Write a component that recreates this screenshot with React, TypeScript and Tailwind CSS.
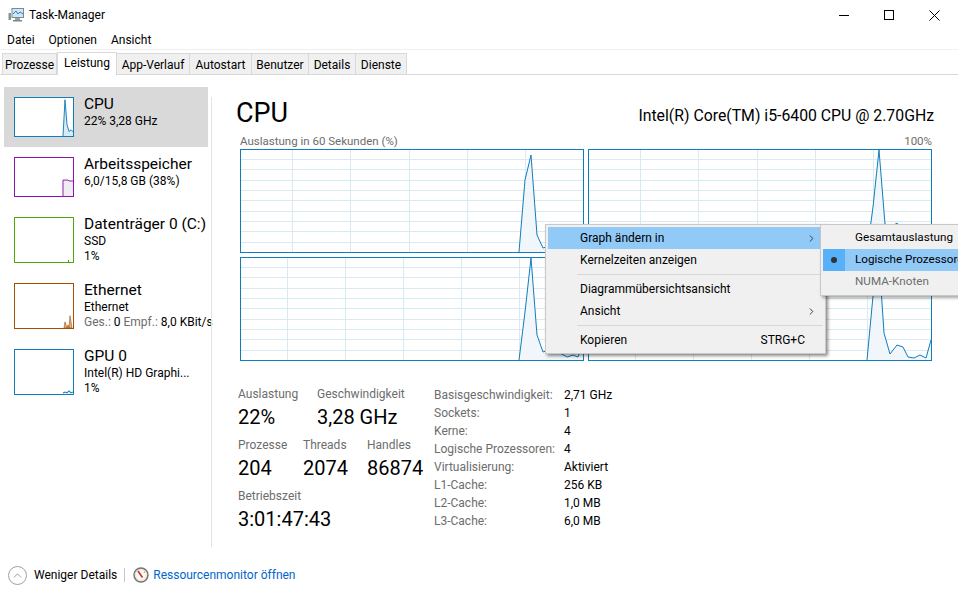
import { ChevronRight, ChevronUp } from 'lucide-react';

const FONT = "font-['Roboto','Liberation_Sans',sans-serif]";

const MENU_ITEMS = ['Datei', 'Optionen', 'Ansicht'];

const TABS = [
  { label: 'Prozesse', w: 'w-[55px]' },
  { label: 'Leistung', w: 'w-[60px]', active: true },
  { label: 'App-Verlauf', w: 'w-[73px]' },
  { label: 'Autostart', w: 'w-[62px]' },
  { label: 'Benutzer', w: 'w-[57px]' },
  { label: 'Details', w: 'w-[47px]' },
  { label: 'Dienste', w: 'w-[51px]' },
];

const SPECS = [
  ['Basisgeschwindigkeit:', '2,71 GHz'],
  ['Sockets:', '1'],
  ['Kerne:', '4'],
  ['Logische Prozessoren:', '4'],
  ['Virtualisierung:', 'Aktiviert'],
  ['L1-Cache:', '256 KB'],
  ['L2-Cache:', '1,0 MB'],
  ['L3-Cache:', '6,0 MB'],
];

// coordinates are local to each 344x104 graph box
const GRAPHS = [
  {
    grid: [52, 110, 169, 227, 285],
    line: '279,103 285,31 291,6 297,86 303,99 309,97 316,92 324,98 332,95 343,97',
  },
  {
    grid: [52, 110, 169, 227, 285],
    line: '279,103 285,58 291,1 297,75 303,78 309,74 320,90 332,96 343,98',
  },
  {
    grid: [47, 105, 163, 221, 279],
    line: '279,103 285,55 291,1 297,78 303,95 309,93 320,96 327,100 333,98 338,100 343,86',
  },
  {
    grid: [47, 105, 163, 221, 279],
    line: '279,103 285,39 291,1 296,76 302,97 309,88 315,90 320,100 326,101 332,98 338,101 343,83',
  },
];

const Graph = ({ grid, line }: { grid: number[]; line: string }) => (
  <div className="h-[104px] w-[344px] border border-[#117dbb] bg-white">
    <svg width="342" height="102" viewBox="1 1 342 102" className="block">
      {[10, 20, 31, 41, 51, 62, 72, 82, 93].map((y) => (
        <line key={y} x1="0" x2="344" y1={y + 0.5} y2={y + 0.5} stroke="#d9eaf4" />
      ))}
      {grid.map((x) => (
        <line key={x} x1={x + 0.5} x2={x + 0.5} y1="0" y2="104" stroke="#d9eaf4" />
      ))}
      <polygon points={`${line} 343,103`} fill="#f1f6fa" />
      <polyline points={line} fill="none" stroke="#117dbb" strokeWidth="1" />
    </svg>
  </div>
);

const Thumb = ({
  color,
  h,
  children,
}: {
  color: string;
  h: string;
  children?: React.ReactNode;
}) => (
  <div className={`w-[60px] shrink-0 border ${h} ${color} bg-white`}>
    <svg width="58" height="100%" viewBox="0 0 58 43" preserveAspectRatio="none" className="block h-full">
      {children}
    </svg>
  </div>
);

const SidebarRow = ({
  name,
  lines,
  thumb,
  active,
  tall,
}: {
  name: string;
  lines: React.ReactNode[];
  thumb: React.ReactNode;
  active?: boolean;
  tall?: boolean;
}) => (
  <div className={`flex gap-[10px] pl-[10px] pt-[10px] ${tall ? 'h-[66px]' : 'h-[60px]'} ${active ? 'bg-[#d9d9d9]' : ''}`}>
    {thumb}
    <div className="min-w-0 whitespace-nowrap">
      <div className="-mt-[2px] text-[15.5px] leading-[19px] text-black">{name}</div>
      {lines.map((l, i) => (
        <div key={i} className="text-[12px] leading-[15px] text-black">
          {l}
        </div>
      ))}
    </div>
  </div>
);

const Stat = ({ label, value, w }: { label: string; value: string; w: string }) => (
  <div className={w}>
    <div className="text-[12px] leading-[16px] text-[#6d6d6d]">{label}</div>
    <div className="mt-[2px] text-[20px] leading-[26px] text-black">{value}</div>
  </div>
);

const MenuRow = ({
  label,
  hint,
  arrow,
  hot,
}: {
  label: string;
  hint?: string;
  arrow?: boolean;
  hot?: boolean;
}) => (
  <div className={`flex h-[22px] items-center pl-[32px] pr-[6px] text-[12px] text-black ${hot ? 'bg-[#91c9f7]' : ''}`}>
    <span className="flex-1">{label}</span>
    {hint && <span className="mr-[12px]">{hint}</span>}
    {arrow && <ChevronRight size={11} strokeWidth={2} className="text-[#333]" />}
  </div>
);

export default function App() {
  return (
    <div className={`relative h-[599px] w-[958px] overflow-hidden bg-white ${FONT}`}>
      {/* title bar */}
      <div className="flex h-[30px] items-center pl-[8px]">
        <svg width="16" height="16" viewBox="0 0 16 16" className="mr-[5px]">
          <rect x="0.5" y="6" width="2.5" height="7" fill="#7f9a86" />
          <rect x="4" y="1.5" width="11.5" height="9" fill="#cfe6f5" stroke="#7d8a94" />
          <polyline points="5,7 8,4 10,7 12,5 15,7" fill="none" stroke="#2a80c4" />
          <rect x="7" y="11" width="5" height="2" fill="#9aa3aa" />
          <rect x="5" y="13" width="9" height="1.5" fill="#80888e" />
        </svg>
        <span className="text-[12px] text-black">Task-Manager</span>
        <div className="ml-auto flex items-center">
          <div className="h-px w-[10px] bg-black" />
          <div className="ml-[35px] h-[10px] w-[10px] border border-black" />
          <svg width="11" height="11" viewBox="0 0 11 11" className="ml-[35px] mr-[18px]">
            <path d="M0.5 0.5L10.5 10.5M10.5 0.5L0.5 10.5" stroke="#000" fill="none" />
          </svg>
        </div>
      </div>

      {/* menu bar */}
      <div className="flex h-[19px] items-center gap-[14px] pl-[7px] text-[12px] text-black">
        {MENU_ITEMS.map((m) => (
          <span key={m}>{m}</span>
        ))}
      </div>
      <div className="h-px bg-[#f0f0f0]" />

      {/* tabs */}
      <div className="flex h-[25px] items-end border-b border-[#d9d9d9] pl-[2px]">
        {TABS.map((t) =>
          t.active ? (
            <div
              key={t.label}
              className={`-mb-px flex h-[23px] ${t.w} items-center justify-center border border-b-0 border-[#d9d9d9] bg-white pb-[3px] text-[12px] text-black`}
            >
              {t.label}
            </div>
          ) : (
            <div
              key={t.label}
              className={`flex h-[21px] ${t.w} items-center justify-center border border-b-0 border-l-0 border-[#d9d9d9] bg-[#f0f0f0] pt-[1px] text-[12px] text-black first:border-l`}
            >
              {t.label}
            </div>
          ),
        )}
      </div>

      {/* main */}
      <div className="flex h-[475px]">
        <div className="ml-[4px] mt-[12px] w-[204px] shrink-0">
          <SidebarRow
            active
            name="CPU"
            lines={['22%  3,28 GHz']}
            thumb={
              <Thumb color="border-[#117dbb]" h="h-[40px]">
                <polygon points="48,43 50,2 52,30 54,38 56,36 58,38 58,43" fill="#d9eaf4" />
                <polyline points="48,43 50,2 52,30 54,38 56,36 58,38" fill="none" stroke="#117dbb" />
              </Thumb>
            }
          />
          <SidebarRow
            name="Arbeitsspeicher"
            lines={['6,0/15,8 GB (38%)']}
            thumb={
              <Thumb color="border-[#8b12ae]" h="h-[40px]">
                <polygon points="48,43 48,25 53,25 54,26 58,26 58,43" fill="#f1ecf4" />
                <polyline points="48,43 48,25 53,25 54,26 58,26" fill="none" stroke="#8b12ae" />
              </Thumb>
            }
          />
          <SidebarRow
            tall
            name="Datenträger 0 (C:)"
            lines={['SSD', '1%']}
            thumb={
              <Thumb color="border-[#4da60c]" h="h-[46px]">
                <rect x="53" y="41" width="1" height="2" fill="#4da60c" />
              </Thumb>
            }
          />
          <SidebarRow
            tall
            name="Ethernet"
            lines={[
              'Ethernet',
              <>
                <span className="text-[#6d6d6d]">Ges.:</span> 0 <span className="text-[#6d6d6d]">Empf.:</span> 8,0 KBit/s
              </>,
            ]}
            thumb={
              <Thumb color="border-[#a74f01]" h="h-[46px]">
                <polygon points="49,43 50,37 52,43 53,40 54,43 55,31 57,43" fill="#d8b79c" stroke="#a74f01" strokeWidth="0.6" />
              </Thumb>
            }
          />
          <SidebarRow
            tall
            name="GPU 0"
            lines={['Intel(R) HD Graphi...', '1%']}
            thumb={
              <Thumb color="border-[#117dbb]" h="h-[46px]">
                <polyline points="48,42 50,41 52,42 54,40 56,42 58,41" fill="none" stroke="#117dbb" />
              </Thumb>
            }
          />
        </div>
        <div className="ml-[3px] mt-[22px] h-[450px] w-px shrink-0 bg-[#e3e3e3]" />

        {/* detail pane */}
        <div className="min-w-0 flex-1 pl-[24px] pr-[24px]">
          <div className="mt-[20px] flex items-end justify-between">
            <span className="text-[27px] leading-[36px] text-black">CPU</span>
            <span className="pb-[5px] text-[15.8px] leading-[20px] text-black">Intel(R) Core(TM) i5-6400 CPU @ 2.70GHz</span>
          </div>
          <div className="mt-[2px] flex justify-between pl-[4px] pr-[2px] text-[11.5px] leading-[16px] text-[#6d6d6d]">
            <span>Auslastung in 60 Sekunden (%)</span>
            <span>100%</span>
          </div>
          <div className="ml-[4px] grid w-[692px] grid-cols-[344px_344px] gap-x-[4px] gap-y-[4px]">
            {GRAPHS.map((g, i) => (
              <Graph key={i} grid={g.grid} line={g.line} />
            ))}
          </div>

          <div className="ml-[2px] mt-[25px] flex items-start">
            <div className="w-[196px]">
              <div className="flex">
                <Stat label="Auslastung" value="22%" w="w-[79px]" />
                <Stat label="Geschwindigkeit" value="3,28 GHz" w="w-[110px]" />
              </div>
              <div className="mt-[7px] flex">
                <Stat label="Prozesse" value="204" w="w-[65px]" />
                <Stat label="Threads" value="2074" w="w-[64px]" />
                <Stat label="Handles" value="86874" w="w-[60px]" />
              </div>
              <div className="mt-[7px]">
                <Stat label="Betriebszeit" value="3:01:47:43" w="w-[120px]" />
              </div>
            </div>
            <div className="grid grid-cols-[130px_auto] text-[12px] leading-[18px]">
              {SPECS.map(([k, v]) => (
                <div key={k} className="contents">
                  <span className="text-[#6d6d6d]">{k}</span>
                  <span className="text-black">{v}</span>
                </div>
              ))}
            </div>
          </div>
        </div>
      </div>

      {/* footer */}
      <div className="flex h-[49px] items-center pl-[8px] pt-[1px] text-[12px]">
        <div className="mr-[7px] flex h-[19px] w-[19px] items-center justify-center rounded-full border border-[#a0a0a0]">
          <ChevronUp size={13} strokeWidth={1.5} className="text-[#8a8a8a]" />
        </div>
        <span className="text-black">Weniger Details</span>
        <div className="ml-[7px] mr-[8px] h-[14px] w-px bg-[#c8c8c8]" />
        <svg width="16" height="16" viewBox="0 0 16 16" className="mr-[4px]">
          <circle cx="8" cy="8" r="7" fill="#e8e6e2" stroke="#77736c" strokeWidth="1.4" />
          <circle cx="8" cy="8" r="4.8" fill="#fbfaf8" />
          <path d="M5 4L9.5 10.5" stroke="#c8321e" strokeWidth="1.6" />
          <path d="M11.5 4.5L11 6" stroke="#d08a3c" />
        </svg>
        <span className="text-[#0066cc]">Ressourcenmonitor öffnen</span>
      </div>

      {/* context menu */}
      <div className="absolute left-[545px] top-[224px] w-[281px] border border-[#c8c8c8] bg-[#f0f0f0] p-[2px] shadow-[2px_2px_3px_rgba(0,0,0,0.45)]">
        <MenuRow label="Graph ändern in" arrow hot />
        <MenuRow label="Kernelzeiten anzeigen" />
        <div className="my-[3px] ml-[29px] h-px bg-[#d7d7d7]" />
        <MenuRow label="Diagrammübersichtsansicht" />
        <MenuRow label="Ansicht" arrow />
        <div className="my-[3px] ml-[29px] h-px bg-[#d7d7d7]" />
        <MenuRow label="Kopieren" hint="STRG+C" />
      </div>

      {/* submenu */}
      <div className="absolute left-[820px] top-[224px] w-[160px] border border-[#c8c8c8] bg-[#f0f0f0] p-[2px] text-[11.7px] shadow-[2px_2px_3px_rgba(0,0,0,0.35)]">
        <div className="flex h-[22px] items-center pl-[32px] text-black">Gesamtauslastung</div>
        <div className="flex h-[22px] items-center bg-[#91c9f7] text-black">
          <div className="flex h-[22px] w-[22px] items-center justify-center bg-[#56b0fa]">
            <div className="h-[6px] w-[6px] rounded-full bg-[#333]" />
          </div>
          <span className="ml-[10px]">Logische Prozessoren</span>
        </div>
        <div className="flex h-[22px] items-center pl-[32px] text-[#6d6d6d]">NUMA-Knoten</div>
      </div>
    </div>
  );
}
